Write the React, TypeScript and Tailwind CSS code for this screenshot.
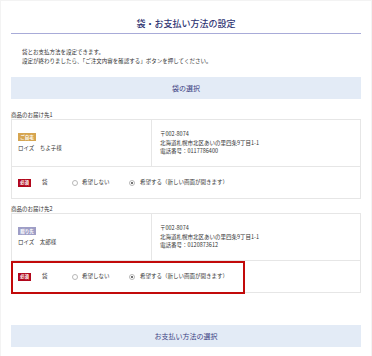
import type { ReactNode } from "react";

const jp = { fontFamily: '"Noto Sans CJK JP", "Noto Sans", sans-serif' };

type Dest = {
  label: string;
  badge: string;
  badgeClass: string;
  name: string;
  zip: string;
  address: string;
  tel: string;
};

const dests: Dest[] = [
  {
    label: "商品のお届け先1",
    badge: "ご自宅",
    badgeClass: "bg-[#d6a550]",
    name: "ロイズ　ちよ子様",
    zip: "〒002-8074",
    address: "北海道札幌市北区あいの里四条9丁目1-1",
    tel: "電話番号：0117786400",
  },
  {
    label: "商品のお届け先2",
    badge: "贈り先",
    badgeClass: "bg-[#9e9ec6]",
    name: "ロイズ　太郎様",
    zip: "〒002-8074",
    address: "北海道札幌市北区あいの里四条9丁目1-1",
    tel: "電話番号：0120873612",
  },
];

function Radio({ checked }: { checked?: boolean }) {
  return (
    <span className="flex h-[6px] w-[6px] shrink-0 items-center justify-center rounded-full border border-[#b8b8b8] bg-white">
      {checked && <span className="h-[2px] w-[2px] rounded-full bg-[#444]" />}
    </span>
  );
}

function Band({ children }: { children: ReactNode }) {
  return (
    <div className="flex h-[22px] items-center justify-center bg-[#e3ebf6] text-[7px] text-[#3d4283]">
      {children}
    </div>
  );
}

function DestTable({ dest, highlight }: { dest: Dest; highlight?: boolean }) {
  return (
    <div className="relative border border-[#e6e6e6]">
      <div className="flex h-[47px] border-b border-[#e6e6e6]">
        <div className="flex w-[140px] flex-col justify-center gap-[3px] border-r border-[#e6e6e6] pl-[6px]">
          <span
            className={`flex h-[8px] w-[18px] items-center justify-center text-[4.5px] font-bold leading-none text-white ${dest.badgeClass}`}
          >
            {dest.badge}
          </span>
          <span className="text-[5.5px] leading-[9px] text-[#333]">{dest.name}</span>
        </div>
        <div className="flex flex-col justify-center pl-[8px] text-[5.5px] leading-[8.5px] text-[#333]">
          <span>{dest.zip}</span>
          <span>{dest.address}</span>
          <span>{dest.tel}</span>
        </div>
      </div>
      <div className="flex h-[31px] items-center pl-[6px] text-[5.5px] leading-none text-[#333]">
        <span className="flex h-[8px] w-[13px] items-center justify-center bg-[#b1071c] text-[4.5px] font-bold text-white">
          必須
        </span>
        <span className="ml-[11px] w-[30px]">袋</span>
        <span className="flex w-[57px] items-center">
          <Radio />
          <span className="ml-[4px]">希望しない</span>
        </span>
        <span className="flex items-center">
          <Radio checked />
          <span className="ml-[5px]">希望する（新しい画面が開きます）</span>
        </span>
      </div>
      {highlight && (
        <div className="absolute left-[-1px] top-[47px] h-[33px] w-[234px] border-2 border-[#c20a0a]" />
      )}
    </div>
  );
}

export default function App() {
  return (
    <div className="h-[356px] w-[372px] overflow-hidden bg-[#f3f3f3] pl-[1px] pr-[1px] pt-[1px]" style={jp}>
      <div className="h-full bg-white px-[10px]">
        <div className="h-[33px] border-b border-[#a8abd8] pt-[17px] text-center text-[9px] font-medium leading-[12px] text-[#2f3573]">
          袋・お支払い方法の設定
        </div>

        <div className="mt-[14px] pl-[11px] text-[5.5px] leading-[9px] text-[#333]">
          <p>袋とお支払方法を設定できます。</p>
          <p>設定が終わりましたら、「ご注文内容を確認する」ボタンを押してください。</p>
        </div>

        <div className="mt-[11px]">
          <Band>袋の選択</Band>
        </div>

        <div className="mt-[12px] text-[5.5px] leading-[8px] text-[#333]">{dests[0].label}</div>
        <DestTable dest={dests[0]} />

        <div className="mt-[6px] text-[5.5px] leading-[8px] text-[#333]">{dests[1].label}</div>
        <DestTable dest={dests[1]} highlight />

        <div className="mt-[32px]">
          <Band>お支払い方法の選択</Band>
        </div>
      </div>
    </div>
  );
}
